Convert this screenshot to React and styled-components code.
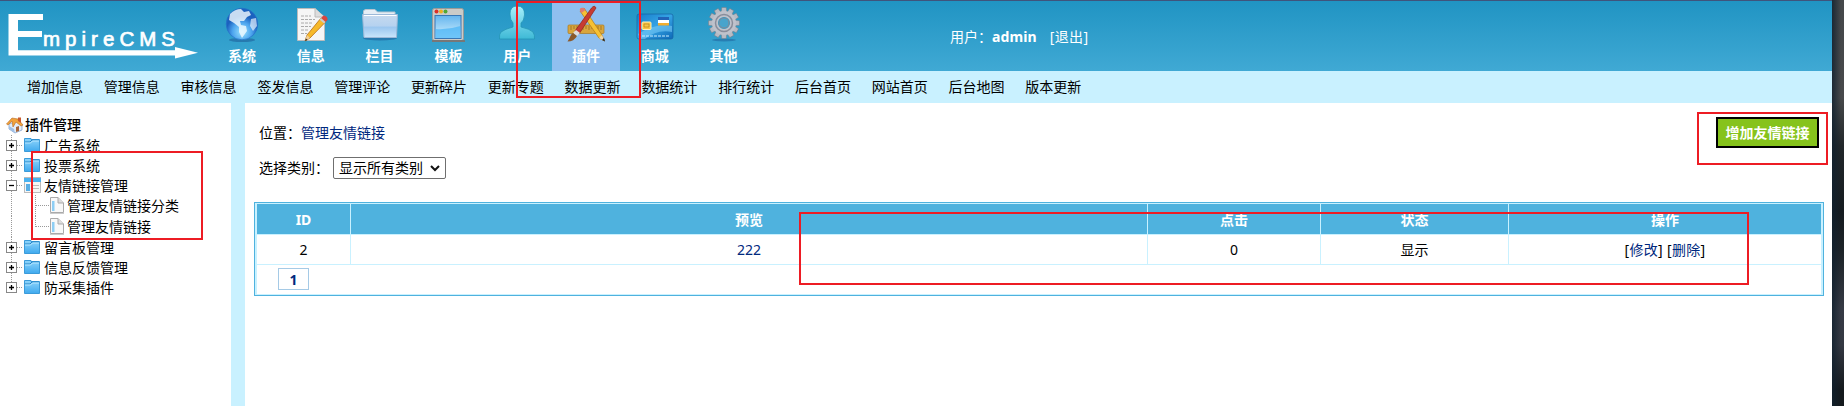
import React from 'react';
import styled, { createGlobalStyle } from 'styled-components';

const Global = createGlobalStyle`
  * { box-sizing: border-box; }
  body {
    margin: 0; overflow: hidden; background: #fff; color: #000;
    font: 14px/20px "Noto Sans", "Noto Sans CJK SC", sans-serif;
  }
`;
const Desktop = styled.div`
  position: relative; display: flex; width: 1844px; height: 406px;
`;
const Frame = styled.div`
  width: 1832px; display: flex; flex-direction: column; border-top: 1px solid #3f547c;
`;
const Wallpaper = styled.div`
  flex: 1; background: linear-gradient(90deg, rgba(16, 32, 46, .8) 0, transparent 9px),
    linear-gradient(180deg, #45484b 0, #47494b 24%, #22272a 36%, #151b20 52%, #1d2328 62%, #363a45 76%, #343842 85%, #14191d 96%);
`;
const Header = styled.header`
  height: 70px; display: flex; background: linear-gradient(180deg, #2094c3, #40a9d4);
  color: #fff;
`;
const LogoBox = styled.div`width: 208px; padding: 11px 0 0 8px;`;
const Menu = styled.nav`display: flex; gap: 0.8px; padding-top: 2px; width: 742px;`;
const MenuItem = styled.a`
  width: 68px; height: 68px; display: flex; flex-direction: column; align-items: center;
  background: ${p => (p.$active ? '#8fbfef' : 'transparent')};
  font-weight: 700; line-height: 20px; gap: 3px;
  svg { display: block; flex: none; }
`;
const User = styled.div`
  display: flex; align-items: center; height: 70px; padding-top: 2px;
  b { margin-right: 13px; letter-spacing: .1px; }
  span { letter-spacing: .4px; }
`;
const SubNav = styled.nav`
  height: 32px; background: #c9f1ff; display: flex; gap: 20.8px; padding: 6px 0 0 27px;
`;
const SubLink = styled.a`width: 56px; white-space: nowrap;`;
const Body = styled.div`flex: 1; display: flex;`;
const Sidebar = styled.aside`width: 231px; padding: 11px 0 0 6px;`;
const Gutter = styled.div`width: 14px; background: #c9f1ff;`;
const TreeTitle = styled.div`
  display: flex; align-items: center; height: 21px; gap: 1px; font-weight: 500;
`;
const Tree = styled.div`display: flex; flex-direction: column;`;
const TreeRow = styled.div`
  display: flex; height: ${p => (p.$leaf ? 21 : 20)}px; white-space: nowrap;
  line-height: 20px;
  svg { display: block; flex: none; }
`;
const TreeLabel = styled.span`margin-left: ${p => (p.$leaf ? 2 : 3)}px; padding-top: 1px;`;
const Main = styled.main`flex: 1; padding: 13px 8px 0 9px;`;
const TopRow = styled.div`
  display: flex; justify-content: space-between; height: 32px; padding: 0 5px 0 5px;
`;
const Crumb = styled.div`padding-top: 7px; a { color: #00287e; }`;
const AddButton = styled.button`
  width: 103px; height: 31px; margin-top: 1px; border: 2px solid #000; background: #86c31c; color: #fff;
  font: inherit; font-weight: 700; padding: 0; white-space: nowrap;
`;
const Filter = styled.div`display: flex; margin: 9px 0 0 5px; height: 22px; line-height: 22px;`;
const Select = styled.div`
  width: 113px; height: 22px; border: 1px solid #6f6f6f; border-radius: 2px; margin-left: 4px;
  display: flex; align-items: center; padding-left: 5px; gap: 7px;
`;
const Table = styled.div`
  margin-top: 23px; width: 1570px; height: 94px; border: 1px solid #4fb2de;
  padding: 1px 2px 0; background: #c9f1ff;
`;
const Row = styled.div`
  display: grid; grid-template-columns: 93px 796px 172px 187px 1fr; column-gap: 1px;
  height: ${p => (p.$head ? 30 : 29)}px; margin-bottom: 1px;
  font-weight: ${p => (p.$head ? 700 : 400)};
  color: ${p => (p.$head ? '#fff' : '#000')};
`;
const Cell = styled.div`
  background: ${p => (p.$head ? '#4fb2de' : '#fff')};
  display: flex; align-items: center; justify-content: center; padding-top: 1px;
  a { color: #00287e; }
`;
const Actions = styled.span`letter-spacing: .3px;`;
const Pager = styled.div`height: 29px; background: #fff; padding: 3px 0 0 21px;`;
const Page = styled.div`
  width: 31px; height: 22px; border: 1px solid #a5cae6; color: #00287e; font-weight: 700;
  text-align: center; line-height: 22px;
`;
const Mark = styled.div`
  position: absolute; border: 2px solid #ed1c24;
  left: ${p => p.$x}px; top: ${p => p.$y}px; width: ${p => p.$w}px; height: ${p => p.$h}px;
`;

const Logo = () => (
  <svg width="194" height="50" viewBox="8 12 194 50">
    <path d="M8.500 14H43V20H18V31H42V37H18V50.300H175V47L198 52.700L175 58.500V55.500H8.500Z" fill="#fff" />
    <text x="43" y="46" fill="#fff" stroke="#fff" strokeWidth=".7" fontFamily="Liberation Sans, sans-serif" fontSize="20.500" textLength="132" lengthAdjust="spacing">mpireCMS</text>
  </svg>
);

const Globe = () => (
  <g>
    <ellipse cx="20" cy="37" rx="13" ry="2" fill="#137" opacity=".35" />
    <circle cx="20" cy="21" r="15.800" fill="url(#globe)" stroke="#2472c9" strokeWidth=".7" />
    <path d="M8 11Q13 6 19 6L22 9L27 8L29 12L25 14L22 18L18 18L19 22L24 23L25 28L20 35L17 29L17 24L12 20L7 17Z" fill="#f4fbff" opacity=".8" />
    <path d="M29 16L34 15L35 23L31 28L28 23Z" fill="#f4fbff" opacity=".65" />
  </g>
);
const Doc = () => (
  <g transform="translate(0 1)">
    <path d="M6.500 4.500H24L33.500 13V36.500H6.500Z" fill="#f5f5f5" stroke="#bbb" />
    <path d="M24 4.500V13H33.500" fill="#ddd" stroke="#bbb" />
    <path d="M10 12H20M10 15.500H24M10 19H22M10 22.500H20M10 26H18M10 29.500H16" stroke="#aaa" strokeDasharray="3 1" />
    <path d="M30 14L34.500 18L19 34L14 37L16 31Z" fill="#f6b92a" stroke="#b86f13" strokeWidth=".8" />
    <path d="M16 31L19 34L14 37Z" fill="#efcf9b" /><path d="M14 37L15 34.500L16.500 36Z" fill="#222" />
    <path d="M30 14L32.500 11.500Q37 12 36.500 16L34.500 18Z" fill="#d8453f" />
    <path d="M28.500 15.500L30 14L34.500 18L33 19.500Z" fill="#ccc" />
  </g>
);
const Folder = () => (
  <g>
    <ellipse cx="20" cy="35" rx="17" ry="2.500" fill="#137" opacity=".35" />
    <path d="M3.500 12V8Q4 6.500 6 6.500H15L17.500 9H35V14H3.500Z" fill="#e6eef6" stroke="#b6c3d0" />
    <path d="M2.500 11.500H37.500L36.500 34.500H4Z" fill="url(#folder)" stroke="#9db9d8" />
    <path d="M4 12.500H36.500" stroke="#fff" />
  </g>
);
const Win = () => (
  <g transform="translate(0 1)">
    <rect x="4.500" y="4.500" width="31" height="32" rx="2" fill="#cbcbc8" stroke="#9b9b98" />
    <path d="M4 37H37" stroke="#777" strokeWidth="2" />
    <circle cx="8.500" cy="7.500" r="2" fill="#dc3028" /><circle cx="13" cy="7.500" r="2" fill="#eeb020" /><circle cx="17.500" cy="7.500" r="2" fill="#52a735" />
    <rect x="7" y="11.500" width="26" height="23" fill="url(#pane)" stroke="#3877b5" />
    <path d="M7.500 25Q20 26 32.500 22V34H7.500Z" fill="#46b4f6" opacity=".7" />
  </g>
);
const Person = () => (
  <path d="M13 11Q13 3 20 3Q28 3 27.500 12Q27 18 24 20V24Q33 26 36 29Q38 32 37.500 36H2.500Q2 31 4 29Q8 26 16 24V20Q13 17 13 11Z" fill="url(#person)" stroke="#2594b5" strokeWidth=".8" />
);
const Tools = () => (
  <g>
    <rect x="2" y="22" width="36" height="8.500" rx="1" fill="#d9a63d" stroke="#a97924" strokeWidth=".7" />
    <path d="M5 23V27M8 23V26M11 23V27M14 23V26M17 23V27M20 23V26M23 23V27M26 23V26M29 23V27M32 23V26M35 23V27" stroke="#8c641d" strokeWidth=".7" />
    <path d="M14 8L18 5L36 32L38.500 38L33 35Z" fill="#f6c134" stroke="#b07a15" strokeWidth=".7" />
    <path d="M33 35L36 32L38.500 38Z" fill="#efd4a8" /><path d="M36 37L38 35L39 38.500Z" fill="#222" />
    <path d="M14 8Q13 4 18 5L19.500 7L15.500 10Z" fill="#df7a72" />
    <path d="M25.500 5Q28.500 1.500 30 5L13 31L9 28Z" fill="#c73b32" stroke="#8e211d" strokeWidth=".7" />
    <path d="M10 27L14 30L11 33L7 30Z" fill="#ddd" /><path d="M7 30L11 33Q8 38.500 1.500 38.500Q3 36 4 34Q5 31 7 30Z" fill="#8c5a2c" />
  </g>
);
const Card = () => (
  <g>
    <rect x="2" y="11" width="36" height="25" rx="2" fill="url(#card)" stroke="#1561a5" strokeWidth=".7" />
    <path d="M3 31Q20 20 37 23V29Q22 26 10 36H5Z" fill="#7dcdf7" opacity=".55" />
    <rect x="7" y="19" width="9" height="7.500" rx="1" fill="#f6c545" stroke="#fff0b8" /><path d="M9 21H14V24H9Z" fill="none" stroke="#b98418" strokeWidth=".7" />
    <rect x="23" y="14" width="11" height="3" fill="#2163b8" /><rect x="23" y="17" width="11" height="3" fill="#fff" /><rect x="23" y="20" width="11" height="2.500" fill="#f1ad2e" />
    <path d="M7 33H34" stroke="#c9edff" strokeDasharray="3 1" />
  </g>
);
const Gear = () => (
  <g>
    <ellipse cx="20" cy="37" rx="12" ry="1.500" fill="#137" opacity=".3" />
    {Array.from({ length: 12 }, (_, i) => (
      <path key={i} d="M17.800 4.500H22.200L23 11H17Z" fill="#b8bbc4" stroke="#777b85" strokeWidth=".5" transform={`rotate(${i * 30} 20 20)`} />
    ))}
    <circle cx="20" cy="20" r="9" fill="none" stroke="#bfc2cb" strokeWidth="6" />
    <circle cx="20" cy="20" r="8.500" fill="none" stroke="#898d9a" strokeWidth="1.500" />
    <circle cx="20" cy="20" r="5" fill="#47a4cc" stroke="#858995" />
  </g>
);
const Defs = () => (
  <svg width="0" height="0" style={{ position: 'absolute' }}>
    <defs>
      <radialGradient id="globe" cy=".75"><stop offset="0" stopColor="#9be4ff" /><stop offset=".6" stopColor="#4da5ee" /><stop offset="1" stopColor="#1b61bf" /></radialGradient>
      <linearGradient id="folder" x2="0" y2="1"><stop stopColor="#c7d9ee" /><stop offset=".5" stopColor="#b5d2f0" /><stop offset=".55" stopColor="#9bc6ef" /><stop offset="1" stopColor="#c9e5fb" /></linearGradient>
      <linearGradient id="pane" x2="0" y2="1"><stop stopColor="#65b5ee" /><stop offset="1" stopColor="#d3f2ff" /></linearGradient>
      <linearGradient id="person" x2="0" y2="1"><stop stopColor="#a5effb" /><stop offset="1" stopColor="#3eb9d6" /></linearGradient>
      <linearGradient id="card" x2="1" y2="1"><stop stopColor="#157ecb" /><stop offset=".5" stopColor="#35a3e4" /><stop offset="1" stopColor="#0d69b7" /></linearGradient>
      <linearGradient id="tree" x2="0" y2="1"><stop stopColor="#8fd5fb" /><stop offset="1" stopColor="#3fa9ee" /></linearGradient>
    </defs>
  </svg>
);

const menu = [['系统', Globe], ['信息', Doc], ['栏目', Folder], ['模板', Win], ['用户', Person], ['插件', Tools], ['商城', Card], ['其他', Gear]];
const links = ['增加信息', '管理信息', '审核信息', '签发信息', '管理评论', '更新碎片', '更新专题', '数据更新', '数据统计', '排行统计', '后台首页', '网站首页', '后台地图', '版本更新'];
const nodes = [['广告系统'], ['投票系统'], ['友情链接管理', 'open'], ['管理友情链接分类', 'leaf'], ['管理友情链接', 'leaf', true], ['留言板管理'], ['信息反馈管理'], ['防采集插件', 'closed', true]];

const House = () => (
  <svg width="18" height="18" viewBox="0 0 18 18">
    <path d="M3 8L11 5L16 9V14L9 17L3 13Z" fill="#e3edf8" stroke="#7898c5" strokeWidth=".7" />
    <path d="M.500 8L6 2L12 3L17 9L15 10L10 6L7 11L6 5L2 9Z" fill="#f1a23a" stroke="#b76b25" strokeWidth=".6" />
    <path d="M12 1.500H15V7L12 5Z" fill="#c95b2e" /><path d="M10 11L13 10V15L10 16Z" fill="#a76539" /><path d="M3 13L9 17L8 13L3 10Z" fill="#9fc0e6" />
  </svg>
);
const Branch = ({ kind, last }) => {
  if (kind === 'leaf') return (
    <svg width="59" height="21" viewBox="0 0 59 21">
      <g stroke="#999" strokeDasharray="1 1" fill="none"><path d="M5.500 0V21" /><path d={last ? 'M29.500 0V11' : 'M29.500 0V21'} /><path d="M30 10.500H43" /></g>
      <path d="M44.500 2.500H52L57.500 8V17.500H44.500Z" fill="#f8f8f8" stroke="#aaa" /><path d="M52 2.500V8H57.500" fill="#ddd" stroke="#aaa" /><path d="M46 6H48.500V16H46Z" fill="#8dcef5" /><path d="M44 18.500H58" stroke="#ccc" />
    </svg>
  );
  return (
    <svg width="35" height="20" viewBox="0 0 35 20">
      <path d={last ? 'M5.500 0V10' : 'M5.500 0V20'} stroke="#999" strokeDasharray="1 1" />
      <path d="M11 10.500H17" stroke="#999" strokeDasharray="1 1" />
      <rect x=".500" y="5.500" width="10" height="10" fill="#fff" stroke="#888" />
      <path d={kind === 'open' ? 'M3 10.500H8' : 'M3 10.500H8M5.500 8V13'} stroke="#000" strokeWidth="1.300" />
      {kind === 'open' ? (
        <g><rect x="18.500" y="2.500" width="16" height="15" fill="#f6f6f6" stroke="#bbb" /><path d="M18 3H35V7H18Z" fill="#4bb2ef" /><path d="M20 9H24V16H20Z" fill="#58aee5" /><path d="M26 10.500H33M26 13.500H33" stroke="#bbb" /></g>
      ) : (
        <g><path d="M18.500 16.500V3.500H25V4.500H33.500V16.500Z" fill="url(#tree)" stroke="#3b9bd9" /><path d="M19 7H24L26 5H33" fill="none" stroke="#2584c6" /><path d="M19 8H24.500L26.500 6H33" fill="none" stroke="#b6e6ff" /></g>
      )}
    </svg>
  );
};

export default function App() {
  return (
    <Desktop>
      <Global />
      <Defs />
      <Frame>
        <Header>
          <LogoBox><Logo /></LogoBox>
          <Menu>
            {menu.map(([name, Icon]) => (
              <MenuItem key={name} $active={name === '插件'}>
                <svg width="40" height="40" viewBox="0 0 40 40"><Icon /></svg>{name}
              </MenuItem>
            ))}
          </Menu>
          <User>用户：<b>admin</b><span>[退出]</span></User>
        </Header>
        <SubNav>{links.map(l => <SubLink key={l}>{l}</SubLink>)}</SubNav>
        <Body>
          <Sidebar>
            <TreeTitle><House />插件管理</TreeTitle>
            <Tree>
              {nodes.map(([name, kind, last]) => (
                <TreeRow key={name} $leaf={kind === 'leaf'}>
                  <Branch kind={kind} last={last} /><TreeLabel $leaf={kind === 'leaf'}>{name}</TreeLabel>
                </TreeRow>
              ))}
            </Tree>
          </Sidebar>
          <Gutter />
          <Main>
            <TopRow>
              <Crumb>位置：<a>管理友情链接</a></Crumb>
              <AddButton>增加友情链接</AddButton>
            </TopRow>
            <Filter>选择类别：
              <Select>显示所有类别
                <svg width="10" height="7" viewBox="0 0 10 7"><path d="M1 1L5 5L9 1" fill="none" stroke="#111" strokeWidth="2" /></svg>
              </Select>
            </Filter>
            <Table>
              <Row $head>{['ID', '预览', '点击', '状态', '操作'].map(h => <Cell $head key={h}>{h}</Cell>)}</Row>
              <Row>
                <Cell>2</Cell><Cell><a>222</a></Cell><Cell>0</Cell><Cell>显示</Cell>
                <Cell><Actions>[<a>修改</a>] [<a>删除</a>]</Actions></Cell>
              </Row>
              <Pager><Page>1</Page></Pager>
            </Table>
          </Main>
        </Body>
      </Frame>
      <Wallpaper />
      <Mark $x={516} $y={1} $w={125} $h={97} />
      <Mark $x={31} $y={151} $w={172} $h={89} />
      <Mark $x={1697} $y={112} $w={131} $h={53} />
      <Mark $x={799} $y={212} $w={950} $h={73} />
    </Desktop>
  );
}
